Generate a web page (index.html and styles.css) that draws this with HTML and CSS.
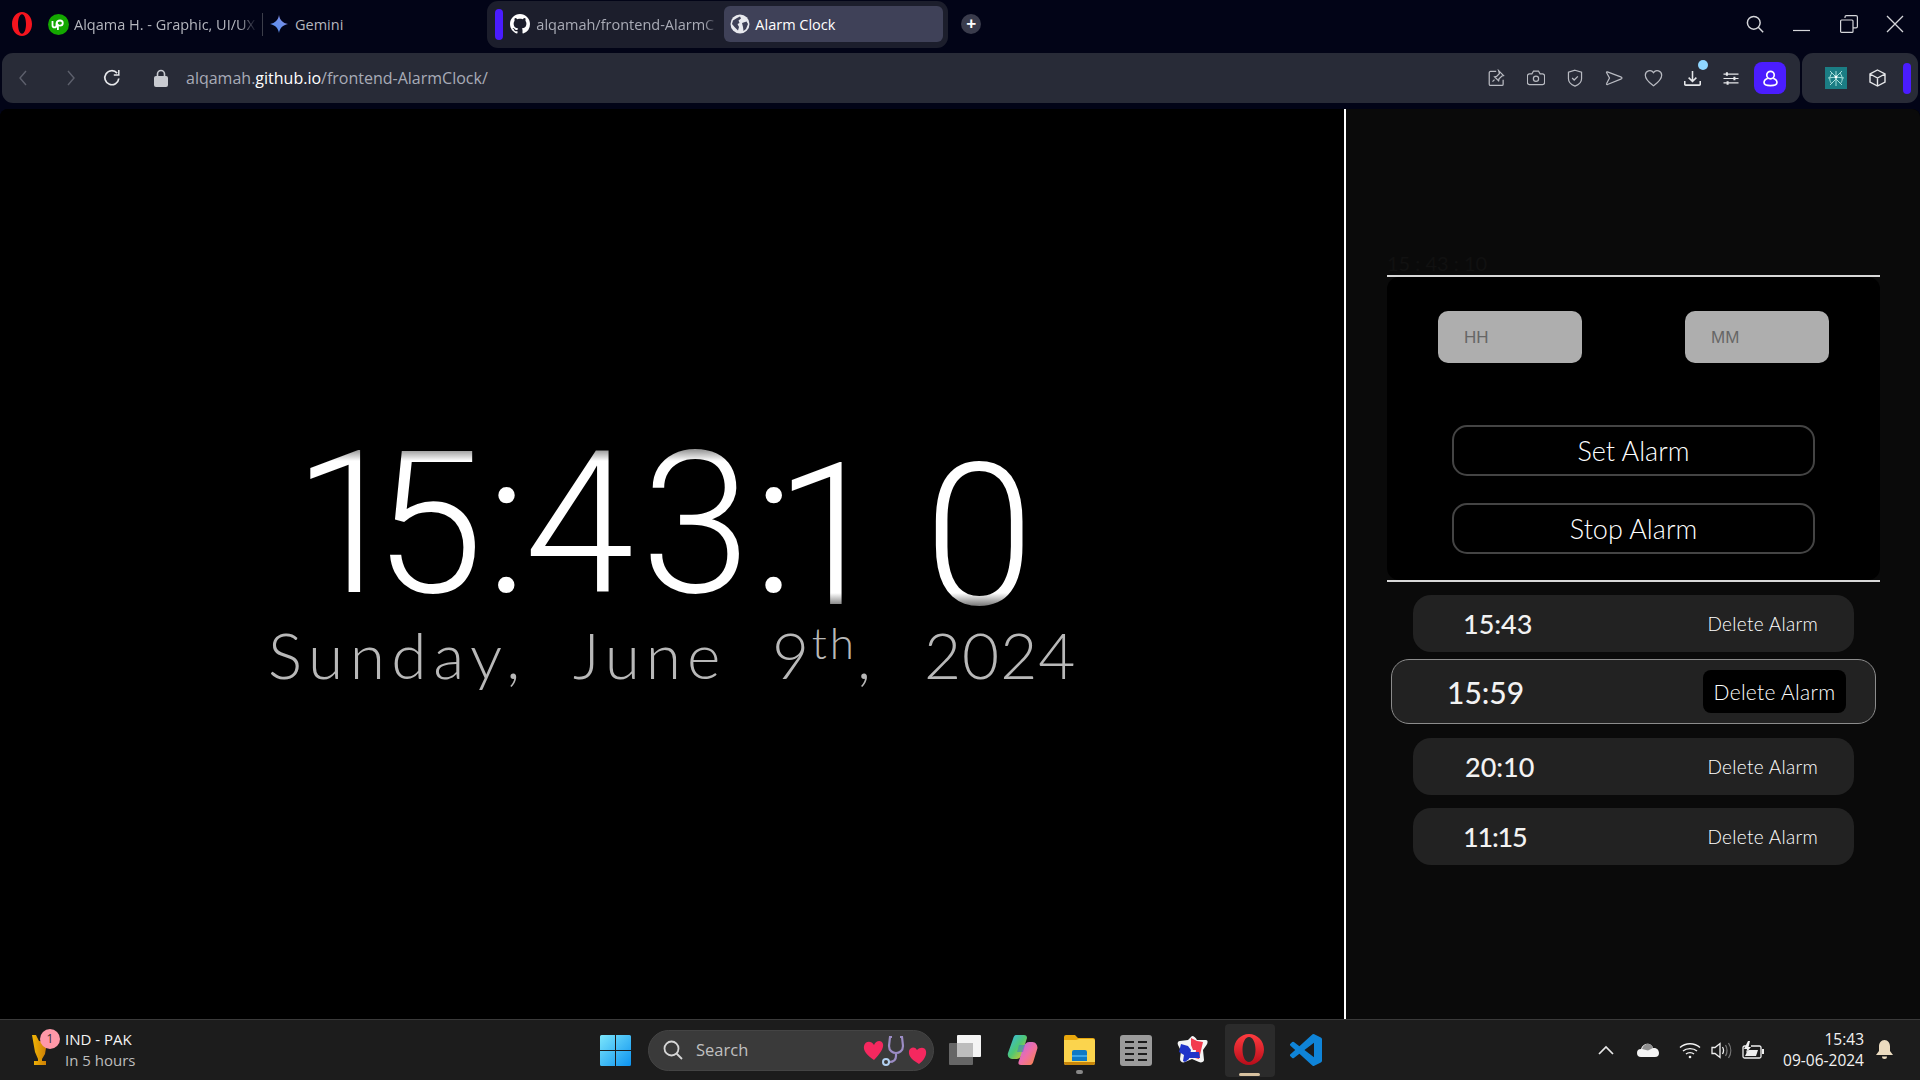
FILE: index.html
```html
<!DOCTYPE html>
<html lang="en">
<head>
<meta charset="utf-8">
<title>Alarm Clock</title>
<link rel="stylesheet" href="styles.css">
</head>
<body>
<div class="screen">
  <header class="tabbar">
    <svg class="opera-logo" width="20" height="24" viewBox="0 0 20 24"><path fill="#f5141e" fill-rule="evenodd" d="M10 0c5.600 0 10 5.300 10 12s-4.400 12-10 12S0 18.700 0 12 4.400 0 10 0zm0 2.200C7.700 2.200 6 6.600 6 12s1.700 9.800 4 9.800 4-4.400 4-9.800-1.700-9.800-4-9.800z"/></svg>
    <svg class="upwork" width="21" height="21" viewBox="0 0 21 21"><circle cx="10.500" cy="10.500" r="10.500" fill="#14a800"/><path d="M4.500 7v4.200c0 3 4 3 4 0V9.500c.4-2.500 2-3 3.500-3 1.600 0 2.800 1 2.800 2.600s-1.200 2.600-2.800 2.600c-1.300 0-2.400-.8-3-2.200M9.900 10v6" fill="none" stroke="#fff" stroke-width="1.800"/></svg>
    <span class="pinned-title">Alqama H. - Graphic, UI/UX</span>
    <span class="tab-divider"></span>
    <svg class="gemini" width="18" height="18" viewBox="0 0 18 18"><defs><linearGradient id="gem" x1="0" y1="1" x2="1" y2="0"><stop offset="0" stop-color="#4c8df6"/><stop offset=".6" stop-color="#6f8fe8"/><stop offset="1" stop-color="#9d7fd8"/></linearGradient></defs><path fill="url(#gem)" d="M9 0c.8 5 3.800 8 9 9-5.200 1-8.200 4-9 9-.8-5-3.800-8-9-9 5.200-1 8.200-4 9-9z"/></svg>
    <span class="pinned-title gemini-title">Gemini</span>
    <div class="tab-group">
      <span class="group-pill"></span>
      <svg class="gh" width="20" height="20" viewBox="0 0 16 16"><path fill="#fff" d="M8 0C3.580 0 0 3.580 0 8c0 3.540 2.290 6.530 5.470 7.590.4.070.55-.17.55-.38 0-.19-.01-.82-.01-1.490-2.010.37-2.530-.49-2.690-.94-.09-.23-.48-.94-.82-1.130-.28-.15-.68-.52-.01-.53.63-.01 1.080.58 1.230.82.720 1.210 1.870.87 2.330.66.070-.52.28-.87.51-1.070-1.780-.2-3.640-.89-3.640-3.950 0-.87.31-1.590.82-2.150-.08-.2-.36-1.020.08-2.120 0 0 .67-.21 2.200.82.64-.18 1.320-.27 2-.27.68 0 1.360.09 2 .27 1.530-1.040 2.200-.82 2.200-.82.44 1.100.16 1.920.08 2.120.51.56.82 1.270.82 2.150 0 3.070-1.870 3.750-3.650 3.950.29.25.54.73.54 1.480 0 1.070-.01 1.930-.01 2.200 0 .21.15.46.55.38A8.013 8.013 0 0016 8c0-4.420-3.580-8-8-8z"/></svg>
      <span class="group-title">alqamah/frontend-AlarmC</span>
      <div class="active-tab">
        <svg width="20" height="20" viewBox="0 0 20 20"><circle cx="10" cy="10" r="9.500" fill="#e8e9ee"/><path fill="#3f4158" d="M3 6.500 7 4l3-1.500 1 2-2.500 2 1 2.500-2 1 1.500 3-1 3.500L4.500 13 2 10zM12 9l4.500-1.500L18 10l-2 5-2.500 2-.5-4z"/></svg>
        <span class="active-title">Alarm Clock</span>
      </div>
    </div>
    <button class="new-tab" type="button">+</button>
    <div class="win-controls">
      <svg width="18" height="18" viewBox="0 0 22 22" fill="none" stroke="#d5d6da" stroke-width="1.800"><circle cx="9.500" cy="9.500" r="7.800"/><path d="m15 15 6 6"/></svg>
      <svg class="win-min" width="18" height="18" viewBox="0 0 18 18" fill="none" stroke="#d5d6da" stroke-width="1.200"><path d="M0 15.500h17"/></svg>
      <svg class="win-max" width="18" height="18" viewBox="0 0 18 18" fill="none" stroke="#d5d6da" stroke-width="1.200"><rect x=".6" y="5" width="12.400" height="12.400" rx="1"/><path d="M5 3V2a1.400 1.400 0 0 1 1.400-1.400H16A1.400 1.400 0 0 1 17.400 2v9.500a1.400 1.400 0 0 1-1.400 1.400h-3"/></svg>
      <svg class="win-close" width="18" height="18" viewBox="0 0 18 18" fill="none" stroke="#d5d6da" stroke-width="1.300"><path d="m1 1 16 16M17 1 1 17"/></svg>
    </div>
  </header>

  <div class="toolbar">
    <nav class="addressbar">
      <svg class="nav-icon" width="10" height="16" viewBox="0 0 10 16" fill="none" stroke="#5d606c" stroke-width="1.400"><path d="M8 1 2 8l6 7"/></svg>
      <svg class="nav-icon nav-forward" width="10" height="16" viewBox="0 0 10 16" fill="none" stroke="#5d606c" stroke-width="1.400"><path d="m2 1 6 7-6 7"/></svg>
      <svg class="nav-reload" width="18" height="18" viewBox="0 0 18 18" fill="none" stroke="#e6e7ea" stroke-width="1.700"><path d="M15.800 9.500a7 7 0 1 1-1.700-5.400"/><path d="M15.800 1v5h-5" stroke-width="1.500"/></svg>
      <svg class="nav-lock" width="14" height="18" viewBox="0 0 14 18"><path fill="none" stroke="#c8cad0" stroke-width="1.600" d="M3.500 8V5a3.500 3.500 0 0 1 7 0v3"/><rect y="7" width="14" height="11" rx="2" fill="#c8cad0"/></svg>
      <span class="url">alqamah.<b class="url-host">github.io</b>/frontend-AlarmClock/</span>
      <div class="tool-icons">
        <svg width="18" height="18" viewBox="0 0 22 22" fill="none" stroke="#b9bbc2" stroke-width="1.500"><path d="M10 3H3a1.500 1.500 0 0 0-1.500 1.500v14A1.500 1.500 0 0 0 3 20h14a1.500 1.500 0 0 0 1.500-1.500V13"/><path d="m13 2 6 6-2 .5-3.500 3.500-.5 2.500-5-5 2.500-.5L14 5.500zM8 13l-2.500 2.500"/></svg>
        <svg width="18" height="18" viewBox="0 0 22 22" fill="none" stroke="#b9bbc2" stroke-width="1.500"><path d="M3 6h3l2-3.500h6L16 6h3a2.500 2.500 0 0 1 2.500 2.500v8A2.500 2.500 0 0 1 19 19H3a2.500 2.500 0 0 1-2.500-2.500v-8A2.500 2.500 0 0 1 3 6z"/><circle cx="11" cy="12" r="3.200"/></svg>
        <svg width="18" height="18" viewBox="0 0 22 22" fill="none" stroke="#b9bbc2" stroke-width="1.500"><path d="M11 1.500 19 4v8c0 4.500-4 7.500-8 9-4-1.500-8-4.500-8-9V4z"/><path d="m7.500 11 2.500 2.500 4.500-4.500"/></svg>
        <svg width="18" height="18" viewBox="0 0 22 22" fill="none" stroke="#b9bbc2" stroke-width="1.500"><path d="M3 3.500 20 10c1 .5 1 1.500 0 2L3 19c-1 .3-1.500-.3-1-1.200L5.500 11 2 4.500c-.5-.9 0-1.300 1-1z"/></svg>
        <svg width="19" height="18" viewBox="0 0 22 22" fill="none" stroke="#b9bbc2" stroke-width="1.500"><path d="M11 20.500C6 16.500 1 13 1 7.500A5.500 5.500 0 0 1 11 4.500a5.500 5.500 0 0 1 10 3c0 5.500-5 9-10 13z"/></svg>
        <span class="download">
          <svg width="17" height="18" viewBox="0 0 22 22" fill="none" stroke="#e6e7ea" stroke-width="2"><path d="M11 2v13M6 10.500l5 5 5-5M1 15v4a1.200 1.200 0 0 0 1.200 1.200h17.600A1.200 1.200 0 0 0 21 19v-4"/></svg>
          <span class="download-dot"></span>
        </span>
        <svg class="sliders" width="16" height="15" viewBox="0 0 22 22" fill="none" stroke="#e6e7ea" stroke-width="1.800"><path d="M0 4.500h22M0 11h22M0 17.500h22"/><path stroke-width="3" d="M5 2v5M16 8.500v5M6 15v5"/></svg>
        <span class="profile">
          <svg width="15" height="19" viewBox="0 0 22 24" fill="none" stroke="#fff" stroke-width="2.400"><circle cx="11" cy="7" r="5.500"/><path d="M7 11.500C3 13 1.500 15.500 1.500 18c0 3 3 4.500 9.500 4.500s9.500-1.500 9.500-4.500c0-2.500-1.500-5-5.500-6.500"/></svg>
        </span>
      </div>
    </nav>
    <div class="extbar">
      <svg width="22" height="22" viewBox="0 0 22 22"><rect width="22" height="22" fill="#1b7d84"/><g fill="none" stroke="#a7e0dc" stroke-width="1"><path d="M11 4v15M5 4l6 6 6-6M3 11l8-1 8 1M5 18l6-6 6 6M7 6c-3 4-3 8 0 11M15 6c3 4 3 8 0 11"/></g><circle cx="11" cy="10" r="1.500" fill="#fff"/></svg>
      <svg class="cube" width="17" height="18" viewBox="0 0 17 18" fill="none" stroke="#e6e7ea" stroke-width="1.400"><path d="M8.500 1 16 5v8l-7.500 4L1 13V5zM1 5l7.500 4L16 5M8.500 9v8"/></svg>
      <span class="ext-pill"></span>
    </div>
  </div>

  <main class="page">
    <section class="clock-side">
      <div class="clock">
        <span class="c1">1</span><span class="c2">5</span><span class="c3">:</span><span class="c4">4</span><span class="c5">3</span><span class="c6">:</span><span class="c7 low">1</span><span class="c8 low">0</span>
      </div>
      <div class="date">
        <span class="w1">Sunday,</span><span class="w2">June</span><span class="w3">9<sup class="ord">th</sup>,</span><span class="w4">2024</span>
      </div>
    </section>
    <aside class="alarm-side">
      <div class="mini-clock">15 : 43 : 10</div>
      <div class="rule"></div>
      <div class="alarm-form">
        <div class="inputs">
          <input class="time-input" type="text" placeholder="HH">
          <input class="time-input" type="text" placeholder="MM">
        </div>
        <button class="action" type="button">Set Alarm</button>
        <button class="action second" type="button">Stop Alarm</button>
      </div>
      <div class="rule"></div>
      <ul class="alarm-list">
        <li class="alarm"><span class="time">15:43</span><span class="del">Delete Alarm</span></li>
        <li class="alarm hovered"><span class="time">15:59</span><span class="del">Delete Alarm</span></li>
        <li class="alarm after-hover"><span class="time t3">20:10</span><span class="del">Delete Alarm</span></li>
        <li class="alarm"><span class="time t4">11:15</span><span class="del">Delete Alarm</span></li>
      </ul>
    </aside>
  </main>

  <footer class="taskbar">
    <div class="widget">
      <span class="trophy">
        <svg width="16" height="32" viewBox="0 0 16 32"><defs><linearGradient id="tro" x1="0" y1="0" x2="1" y2="0"><stop offset="0" stop-color="#f2b705"/><stop offset="1" stop-color="#c97a06"/></linearGradient></defs><path fill="url(#tro)" d="M0 1h4l3 6 8 1-2 12-3 5v2h4v4H2v-4h4v-2L3 18z"/></svg>
        <span class="badge">1</span>
      </span>
      <div class="widget-text"><span class="match">IND - PAK</span><span class="when">In 5 hours</span></div>
    </div>
    <div class="task-center">
      <svg class="win-logo" width="31" height="31" viewBox="0 0 31 31"><defs><linearGradient id="win" x1="0" y1="0" x2="1" y2="1"><stop offset="0" stop-color="#7ce6fb"/><stop offset="1" stop-color="#0c93f0"/></linearGradient></defs><path fill="url(#win)" d="M0 1.500A1.500 1.500 0 0 1 1.500 0H15v15H0zM16 0h13.500A1.500 1.500 0 0 1 31 1.500V15H16zM0 16h15v15H1.500A1.500 1.500 0 0 1 0 29.500zM16 16h15v13.500a1.500 1.500 0 0 1-1.500 1.500H16z"/></svg>
      <div class="search">
        <svg width="20" height="20" viewBox="0 0 20 20" fill="none" stroke="#d6d6d6" stroke-width="1.800"><circle cx="8.500" cy="8.500" r="7"/><path d="m13.500 13.500 5.500 5.500"/></svg>
        <span class="search-text">Search</span>
        <svg class="search-art" width="64" height="32" viewBox="0 0 64 32"><path fill="#f5285f" d="M11 26C4 21 0 17 1 12s7-6 10-1c2-5 8-5 9-1s-3 10-9 16z"/><path fill="#f5285f" d="M56 30c-5-3-11-7-10-13 1-4 6-5 8-1 3-3 8-3 9 1 1 5-3 10-7 13z"/><path fill="none" stroke="#9b8cc4" stroke-width="2.200" d="M29 3h-2l-1 9c0 5 4 7 7 7s7-2 7-7l-1-9h-2M33 19v3c0 4-3 6-7 6"/><circle cx="23" cy="28" r="3" fill="none" stroke="#b2d0f0" stroke-width="2"/></svg>
      </div>
      <svg class="task-view" width="32" height="30" viewBox="0 0 32 30"><rect x="8" width="24" height="22" rx="1" fill="#f4f4f4"/><rect y="8" width="24" height="22" rx="1" fill="#6f6f6f" fill-opacity=".9"/><rect x="8" y="8" width="16" height="14" fill="#bdbdbd"/></svg>
      <svg class="copilot" width="31" height="32" viewBox="0 0 31 32"><defs><linearGradient id="cop1" x1="0" y1="0" x2="1" y2="1"><stop offset="0" stop-color="#35b8f0"/><stop offset=".5" stop-color="#4fc774"/><stop offset="1" stop-color="#f5c518"/></linearGradient><linearGradient id="cop2" x1="0" y1="0" x2="1" y2="1"><stop offset="0" stop-color="#b26ce8"/><stop offset=".5" stop-color="#ef6da8"/><stop offset="1" stop-color="#f7883a"/></linearGradient></defs><path fill="url(#cop1)" d="M9 1h8c2 0 3 1 3 3l-5 16c-1 3-3 5-6 5H5c-3 0-5-3-4-6L6 5c.5-2 1.500-4 3-4z"/><path fill="url(#cop2)" d="M23 31h-9c-2 0-3-1-2.500-3l5-15c1-3 3-5 6-5h3c3 0 5 3 5 6l-4 13c-.5 2-1.500 4-3.500 4z"/><path fill="#2a6fd6" fill-opacity=".45" d="M12 11h6l-2 7h-6z"/></svg>
      <span class="folder-wrap">
        <svg width="31" height="30" viewBox="0 0 31 30"><path fill="#e8a70d" d="M0 2a2 2 0 0 1 2-2h9l3 3h15a2 2 0 0 1 2 2v4H0z"/><path fill="#fbd44d" d="M0 5h12l3-1h14a2 2 0 0 1 2 2v22a2 2 0 0 1-2 2H2a2 2 0 0 1-2-2z"/><path fill="#0f79c6" d="M8 17a2 2 0 0 1 2-2h11a2 2 0 0 1 2 2v9H8z"/><path fill="#3ba4e8" d="M8 20h15v2H8z"/><path fill="#c8860a" d="M0 27h31v1a2 2 0 0 1-2 2H2a2 2 0 0 1-2-2z"/></svg>
        <span class="running-dot"></span>
      </span>
      <svg class="table-app" width="32" height="31" viewBox="0 0 32 31"><rect width="32" height="31" rx="3" fill="#9b9b9b"/><path stroke="#1c1c1c" stroke-width="2" d="M5 7h9M18 7h9M5 13h9M18 13h9M5 19h9M18 19h9M5 25h9M18 25h9"/></svg>
      <svg class="star-app" width="31" height="30" viewBox="0 0 31 30"><path fill="#f4f4f4" d="M15 1c2 0 4 2 5 4l9 0c2 0 2 3 .5 5L26 15l1 10c0 2-3 3-5 2l-7-3-7 3c-2 1-5 0-5-3l1-8-3-6C0 8 1 6 3 6l8-1z"/><path fill="#f23b4e" d="M14 3l6 3 6 1-4 17-4-1 1-8-3 0-2-5z"/><path fill="#1f33c9" d="M4 9l7 2 3 4-2 9-4 3-2-1 1-6-5-3z"/><path fill="#1f33c9" d="M12 17h10l1 6H11z"/></svg>
      <span class="opera-task">
        <svg width="30" height="31" viewBox="0 0 30 31"><defs><linearGradient id="opr" x1="0" y1="0" x2="0" y2="1"><stop offset="0" stop-color="#ff3b3f"/><stop offset="1" stop-color="#b80d1a"/></linearGradient></defs><path fill="url(#opr)" fill-rule="evenodd" d="M15 0c8.300 0 15 7 15 15.500S23.300 31 15 31 0 24 0 15.500 6.700 0 15 0zm0 3c-3.800 0-6.500 5.500-6.500 12.500S11.200 28 15 28s6.500-5.500 6.500-12.500S18.800 3 15 3z"/></svg>
        <span class="opera-underline"></span>
      </span>
      <svg class="vscode" width="32" height="32" viewBox="0 0 24 24"><path fill="#0f84d8" d="M23.150 2.587L18.210.21a1.494 1.494 0 0 0-1.705.29l-9.460 8.630-4.120-3.128a.999.999 0 0 0-1.276.057L.327 7.261A1 1 0 0 0 .326 8.740L3.899 12 .326 15.260a1 1 0 0 0 .001 1.479L1.650 17.940a.999.999 0 0 0 1.276.057l4.120-3.128 9.460 8.630a1.492 1.492 0 0 0 1.704.29l4.942-2.377A1.500 1.500 0 0 0 24 20.060V3.939a1.500 1.500 0 0 0-.85-1.352zm-5.146 14.861L10.826 12l7.178-5.448v10.896z"/></svg>
    </div>
    <div class="tray">
      <svg width="16" height="10" viewBox="0 0 16 10" fill="none" stroke="#e8e8e8" stroke-width="1.700"><path d="m1 9 7-7 7 7"/></svg>
      <svg class="cloud" width="22" height="14" viewBox="0 0 22 14"><path fill="#f4f4f4" d="M0 10a4 4 0 0 1 4-4c1-4 5-6 8-5 2 .5 3.500 2 4 4 3-.5 6 1.500 6 5a4 4 0 0 1-4 4H4a4 4 0 0 1-4-4z"/><path fill="#8f8f8f" d="M5 6c1-4 5-6 7-5 2 .5 3.500 2 4 4l-5 2.500z"/></svg>
      <svg class="wifi" width="22" height="17" viewBox="0 0 22 17" fill="none" stroke="#f2f2f2" stroke-width="1.400"><path d="M1 5.500c5.500-5 14.500-5 20 0M4 9c3.500-3.200 10.500-3.200 14 0M7 12c2-1.800 6-1.800 8 0"/><circle cx="11" cy="15" r="1.300" fill="#f2f2f2" stroke="none"/></svg>
      <svg class="speaker" width="21" height="17" viewBox="0 0 21 17" fill="none" stroke="#efefef" stroke-width="1.300"><path d="M1 5.500h3L9 1.500v14l-5-4H1z"/><path d="M11.500 5c1.200 2 1.200 5 0 7"/><path stroke="#777" d="M14.500 3c2 3 2 8 0 11M17.500 1c3 4.500 3 10.500 0 15"/></svg>
      <svg class="battery" width="22" height="18" viewBox="0 0 22 18" fill="none" stroke="#efefef" stroke-width="1.300"><path d="M5 5H2.500A1.500 1.500 0 0 0 1 6.500v9A1.500 1.500 0 0 0 2.500 17h15a1.500 1.500 0 0 0 1.500-1.500v-9A1.500 1.500 0 0 0 17.500 5H9"/><path fill="#efefef" stroke="none" d="M20 8h2v5h-2zM6 0 2 8h3l-1 4 5-6H6.500L8 0zM3 15l3-6h10l-2 6z"/></svg>
      <div class="datetime"><span>15:43</span><span>09-06-2024</span></div>
      <svg class="bell" width="17" height="20" viewBox="0 0 17 20"><path fill="#ecdcc0" d="M8.500 0C12 0 14 3 14 6.500V11l3 4H0l3-4V6.500C3 3 5 0 8.500 0zM6 16.500h5a2.500 2.500 0 0 1-5 0z"/></svg>
    </div>
  </footer>
</div>
</body>
</html>
```
FILE: styles.css
```css
* { box-sizing: border-box; }
html, body { margin: 0; padding: 0; background: #020417; }
body { width: 1920px; height: 1080px; overflow: hidden; font-family: "Open Sans", "Noto Sans", sans-serif; }
svg { display: block; flex: none; }
.screen { display: flex; flex-direction: column; height: 1080px; }

/* tab strip */
.tabbar { height: 53px; display: flex; align-items: center; padding: 0 0 5px 12px; flex: none; }
.upwork { margin-left: 16px; }
.pinned-title { font-size: 14.5px; color: #b4b6be; white-space: nowrap; }
.upwork + .pinned-title { margin-left: 5px; width: 183px; overflow: hidden; -webkit-mask-image: linear-gradient(to right, #000 90%, transparent); mask-image: linear-gradient(to right, #000 90%, transparent); }
.tab-divider { width: 1px; height: 23px; background: #3c3e4a; margin-left: 5px; }
.gemini { margin-left: 7px; }
.gemini-title { margin-left: 7px; }
.tab-group { display: flex; align-items: center; width: 461px; height: 47px; margin-left: 144px; padding-left: 8px; background: #1c1e2c; border-radius: 11px; }
.group-pill { width: 8px; height: 31px; background: #4a1cff; border-radius: 4px; flex: none; }
.gh { margin-left: 7px; }
.group-title { margin-left: 6px; width: 182px; font-size: 14.5px; color: #a9abb6; white-space: nowrap; -webkit-mask-image: linear-gradient(to right, #000 92%, transparent); mask-image: linear-gradient(to right, #000 92%, transparent); }
.active-tab { display: flex; align-items: center; gap: 5px; width: 219px; height: 36px; margin-left: 6px; padding-left: 6px; background: #3f4158; border-radius: 6px; }
.active-title { font-size: 14.5px; color: #fff; }
.new-tab { width: 20px; height: 20px; margin-left: 13px; padding: 0; border: 0; border-radius: 50%; background: #3a3c4c; color: #fff; font: 700 17px/20px "Liberation Sans", sans-serif; }
.win-controls { display: flex; align-items: center; margin-left: auto; padding-right: 16px; }
.win-min { margin-left: 29px; }
.win-max { margin-left: 29px; }
.win-close { margin-left: 28px; }

/* address row */
.toolbar { display: flex; gap: 2px; height: 50px; padding: 0 2px; flex: none; }
.addressbar { display: flex; align-items: center; width: 1798px; padding-left: 16px; background: #282b37; border-radius: 11px; }
.nav-forward { margin-left: 38px; }
.nav-reload { margin-left: 27px; }
.nav-lock { margin-left: 33px; }
.url { margin-left: 18px; font-size: 16px; color: #a8abb7; }
.url-host { font-weight: 400; color: #fff; }
.tool-icons { display: flex; align-items: center; gap: 21px; margin-left: auto; padding-right: 14px; }
.download { position: relative; display: block; }
.download-dot { position: absolute; top: -9px; right: -7px; width: 10px; height: 10px; border-radius: 50%; background: #8fd6ff; }
.sliders { margin-left: 1px; }
.profile { display: flex; align-items: center; justify-content: center; width: 32px; height: 32px; margin-left: -6px; background: #4b1dff; border-radius: 8px; }
.extbar { display: flex; align-items: center; flex: 1; padding-left: 23px; background: #282b37; border-radius: 11px; }
.cube { margin-left: 22px; }
.ext-pill { width: 8px; height: 31px; margin-left: 17px; background: #4a1cff; border-radius: 4px; }

/* page */
.page { flex: 1; display: flex; margin-top: 6px; background: #000; border-radius: 8px 8px 0 0; overflow: hidden; color: #fff; font-family: "Lato", "Open Sans", sans-serif; }
.clock-side { width: 1344px; flex: none; padding-top: 316px; background: #000; }
.clock { display: flex; align-items: flex-start; padding-left: 293px; height: 198px; font: 300 198px/198px "Roboto", sans-serif; color: transparent; background-image: linear-gradient(to bottom, #999 25px, #fff 36px, #fff 168px, #808080 180px); -webkit-background-clip: text; background-clip: text; }
.low { margin-top: 12px; }
.c1 { letter-spacing: -29px; }
.c2 { letter-spacing: 2px; }
.c3 { letter-spacing: -3px; }
.c4 { letter-spacing: 7px; }
.c5 { letter-spacing: 2px; }
.c6 { letter-spacing: -8px; }
.c7 { margin-left: -12px; letter-spacing: 40px; }
.date { display: flex; align-items: baseline; padding-left: 268px; margin-top: -8px; font-weight: 300; font-size: 64px; line-height: 80px; color: #b8b8b8; white-space: nowrap; }
.w1 { width: 305px; letter-spacing: 6.5px; }
.w2 { width: 199px; letter-spacing: 6px; }
.w3 { width: 152px; letter-spacing: 2.5px; }
.w4 { letter-spacing: 1px; }
.ord { font-size: 44px; line-height: 0; vertical-align: 20px; letter-spacing: 3px; }
.alarm-side { flex: 1; padding: 0 40px 0 41px; background: #0a0a0a; border-left: 2px solid #fff; }
.mini-clock { height: 166px; padding-top: 142px; font-size: 20px; line-height: 24px; color: #111; }
.rule { height: 2px; background: #d8d8d8; }
.alarm-form { height: 303px; padding-top: 34px; background: #000; border-radius: 12px; display: flex; flex-direction: column; align-items: center; }
.inputs { display: flex; justify-content: space-between; width: 391px; margin-bottom: 62px; }
.time-input { width: 144px; height: 52px; padding: 2px 26px 0; border: 0; border-radius: 10px; background: #aeaeae; font: 17px "Liberation Sans", sans-serif; }
.time-input::placeholder { color: #666; opacity: 1; }
.action { width: 363px; height: 51px; padding: 0; background: #000; color: #fff; border: 2px solid #444; border-radius: 15px; font: 300 27px/47px "Lato", sans-serif; }
.second { margin-top: 27px; }
.alarm-list { list-style: none; margin: 0; padding: 13px 0 0; display: flex; flex-direction: column; align-items: center; }
.alarm { display: flex; align-items: center; justify-content: space-between; width: 441px; height: 57px; padding: 0 36px 0 50px; background: #222; border-radius: 18px; }
.alarm + .alarm { margin-top: 13px; }
.time { font-size: 27px; font-weight: 500; color: #f2f2f2; }
.t3 { margin-left: 2px; }
.t4 { letter-spacing: -1.2px; }
.del { font-size: 19px; font-weight: 300; color: #fff; letter-spacing: .3px; }
.alarm.hovered { width: 485px; height: 65px; margin-top: 7px; padding: 0 29px 0 55px; border: 1px solid #8c8c8c; }
.hovered .time { font-size: 30px; }
.hovered .del { width: 143px; height: 43px; background: #000; border-radius: 8px; font-size: 21px; line-height: 43px; text-align: center; color: #fff; }
.alarm.after-hover { margin-top: 14px; }

/* taskbar */
.taskbar { display: flex; align-items: center; height: 61px; flex: none; background: #1c1c1c; border-top: 1px solid #3a3a3a; font-family: "Open Sans", "Noto Sans", sans-serif; }
.widget { display: flex; align-items: center; width: 600px; padding-left: 32px; }
.trophy { position: relative; display: block; }
.badge { position: absolute; top: -5px; left: 8px; width: 20px; height: 20px; border-radius: 50%; background: #ff98a8; color: #333; font-size: 12px; line-height: 20px; text-align: center; }
.widget-text { display: flex; flex-direction: column; margin-left: 17px; line-height: 21px; }
.match { font-size: 15px; font-weight: 500; color: #f4f4f4; }
.when { font-size: 15px; color: #bdbdbd; }
.task-center { display: flex; align-items: center; flex: none; }
.search { display: flex; align-items: center; width: 286px; height: 41px; margin-left: 17px; padding: 0 6px 0 14px; background: #3a3a3a; border-radius: 21px; border: 1px solid #444; }
.search-text { margin-left: 13px; padding-bottom: 2px; font-size: 16.5px; color: #c0c0c0; }
.search-art { margin-left: auto; }
.task-view { margin-left: 15px; }
.copilot { margin-left: 26px; }
.folder-wrap { position: relative; display: block; margin-left: 26px; }
.running-dot { position: absolute; left: 12px; bottom: -9px; width: 7px; height: 4px; border-radius: 2px; background: #888; }
.table-app { margin-left: 25px; }
.star-app { margin-left: 25px; }
.opera-task { position: relative; display: block; margin-left: 17px; padding: 10px 11px 12px 9px; background: #2b2b2b; border-radius: 4px; }
.opera-underline { position: absolute; left: 14px; bottom: 1px; width: 21px; height: 3px; border-radius: 2px; background: #d8c2a0; }
.vscode { margin-left: 15px; }
.tray { display: flex; align-items: center; flex: 1; padding-left: 276px; }
.cloud { margin-left: 23px; }
.wifi { margin-left: 20px; }
.speaker { margin-left: 10px; }
.battery { margin-left: 10px; }
.datetime { display: flex; flex-direction: column; align-items: flex-end; width: 100px; font-size: 15.5px; line-height: 21px; color: #f2f2f2; }
.bell { margin-left: 12px; }
```
